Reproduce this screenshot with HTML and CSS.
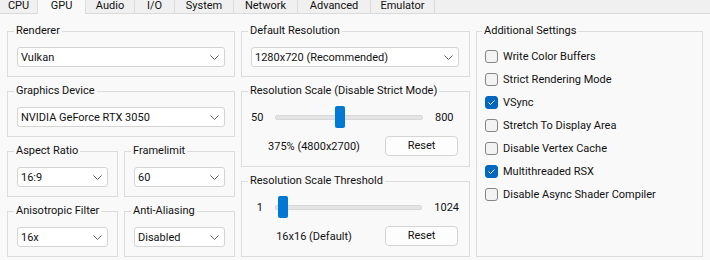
FILE: index.html
```html
<!DOCTYPE html>
<html lang="en">
<head>
	<meta charset="UTF-8">
	<title>GPU</title>
	<link rel="stylesheet" href="styles.css">
</head>

<body>
	<div class="tabs">
		<div class="tab">CPU</div>
		<div class="tab active">GPU</div>
		<div class="tab">Audio</div>
		<div class="tab">I/O</div>
		<div class="tab">System</div>
		<div class="tab">Network</div>
		<div class="tab">Advanced</div>
		<div class="tab">Emulator</div>
	</div>

	<div class="panel">
		<!-- left column -->
		<div class="col">
			<fieldset class="group">
				<legend>Renderer</legend>
				<div class="combo"><span>Vulkan</span><svg width="9" height="5" viewBox="0 0 9 5"><polyline points="0.5,0.5 4.5,4.5 8.5,0.5" /></svg></div>
			</fieldset>
			<fieldset class="group">
				<legend>Graphics Device</legend>
				<div class="combo"><span>NVIDIA GeForce RTX 3050</span><svg width="9" height="5" viewBox="0 0 9 5"><polyline points="0.5,0.5 4.5,4.5 8.5,0.5" /></svg></div>
			</fieldset>
			<div class="pair">
				<fieldset class="group">
					<legend>Aspect Ratio</legend>
					<div class="combo"><span>16:9</span><svg width="9" height="5" viewBox="0 0 9 5"><polyline points="0.5,0.5 4.5,4.5 8.5,0.5" /></svg></div>
				</fieldset>
				<fieldset class="group">
					<legend>Framelimit</legend>
					<div class="combo"><span>60</span><svg width="9" height="5" viewBox="0 0 9 5"><polyline points="0.5,0.5 4.5,4.5 8.5,0.5" /></svg></div>
				</fieldset>
			</div>
			<div class="pair">
				<fieldset class="group">
					<legend>Anisotropic Filter</legend>
					<div class="combo"><span>16x</span><svg width="9" height="5" viewBox="0 0 9 5"><polyline points="0.5,0.5 4.5,4.5 8.5,0.5" /></svg></div>
				</fieldset>
				<fieldset class="group">
					<legend>Anti-Aliasing</legend>
					<div class="combo"><span>Disabled</span><svg width="9" height="5" viewBox="0 0 9 5"><polyline points="0.5,0.5 4.5,4.5 8.5,0.5" /></svg></div>
				</fieldset>
			</div>
		</div>

		<!-- middle column -->
		<div class="col mid">
			<fieldset class="group">
				<legend>Default Resolution</legend>
				<div class="combo"><span>1280x720 (Recommended)</span><svg width="9" height="5" viewBox="0 0 9 5"><polyline points="0.5,0.5 4.5,4.5 8.5,0.5" /></svg></div>
			</fieldset>
			<fieldset class="group scale">
				<legend>Resolution Scale (Disable Strict Mode)</legend>
				<div class="slider">
					<span class="min">50</span>
					<div class="track"><div class="handle" style="left: 59px"></div></div>
					<span class="max">800</span>
				</div>
				<div class="value-row">
					<span class="value">375% (4800x2700)</span>
					<div class="btn">Reset</div>
				</div>
			</fieldset>
			<fieldset class="group scale">
				<legend>Resolution Scale Threshold</legend>
				<div class="slider">
					<span class="min">1</span>
					<div class="track"><div class="handle" style="left: 2px"></div></div>
					<span class="max">1024</span>
				</div>
				<div class="value-row">
					<span class="value">16x16 (Default)</span>
					<div class="btn">Reset</div>
				</div>
			</fieldset>
		</div>

		<!-- right column -->
		<div class="col">
			<fieldset class="group extra">
				<legend>Additional Settings</legend>
				<div class="check"><span class="box"></span>Write Color Buffers</div>
				<div class="check"><span class="box"></span>Strict Rendering Mode</div>
				<div class="check"><span class="box on"><svg width="13" height="13" viewBox="0 0 13 13"><polyline points="3.5,6.5 5.5,8.5 9.5,4.5" /></svg></span>VSync</div>
				<div class="check"><span class="box"></span>Stretch To Display Area</div>
				<div class="check"><span class="box"></span>Disable Vertex Cache</div>
				<div class="check"><span class="box on"><svg width="13" height="13" viewBox="0 0 13 13"><polyline points="3.5,6.5 5.5,8.5 9.5,4.5" /></svg></span>Multithreaded RSX</div>
				<div class="check"><span class="box"></span>Disable Async Shader Compiler</div>
			</fieldset>
		</div>
	</div>
</body>

</html>
```

FILE: styles.css
```css
body {
	margin: 0;
	background: #f9f9f9;
	color: #111;
	font-family: Roboto, "Noto Sans", sans-serif;
	font-size: 11px;
}

/*标签栏*/
.tabs {
	display: flex;
	height: 13px;
	background: #f0f0f0;
	border-bottom: 1px solid #dadada;
}
.tab {
	height: 13px;
	line-height: 12px;
	text-align: center;
	border-right: 1px solid #dcdcdc;
	white-space: nowrap;
}
.tab:nth-child(1) { width: 37px; }
.tab:nth-child(2) { width: 47px; }
.tab:nth-child(3) { width: 48px; }
.tab:nth-child(4) { width: 39px; }
.tab:nth-child(5) { width: 58px; }
.tab:nth-child(6) { width: 63px; }
.tab:nth-child(7) { width: 72px; }
.tab:nth-child(8) { width: 63px; }
.tab.active {
	height: 14px;
	line-height: 11px;
	margin-bottom: -1px;
	background: #f9f9f9;
	position: relative;
}

/*主面板*/
.panel {
	display: grid;
	grid-template-columns: 228px 229px 227px;
	column-gap: 6px;
	padding: 9px 8px 0 7px;
}
.col {
	display: flex;
	flex-direction: column;
	gap: 6px;
}
.pair {
	display: flex;
	gap: 6px;
}
.pair .group {
	flex: 1;
}

.group {
	margin: 0;
	min-width: 0;
	padding: 8px 9px 9px 9px;
	border: 1px solid #dcdcdc;
}
.mid .group {
	padding-right: 10px;
}
.group legend {
	padding: 0 2px;
	margin-left: -3px;
	line-height: 16px;
}

/*下拉框*/
.combo {
	display: flex;
	align-items: center;
	justify-content: space-between;
	height: 18px;
	padding: 0 4px 0 3px;
	background: #fff;
	border: 1px solid #d4d4d4;
	border-radius: 3px;
	white-space: nowrap;
}
.combo svg {
	margin-right: 1px;
}
.combo polyline {
	fill: none;
	stroke: #606060;
	stroke-width: 1;
}

/*滑块*/
.scale {
	padding-top: 7px;
	padding-bottom: 10px;
}
.slider {
	display: flex;
	align-items: center;
	height: 22px;
}
.slider .min {
	width: 12px;
	text-align: right;
	margin-right: 12px;
}
.slider .max {
	margin-left: 12px;
}
.track {
	position: relative;
	width: 146px;
	height: 3px;
	background: #e4e4e4;
	border: 1px solid #d8d8d8;
	border-radius: 2px;
}
.handle {
	position: absolute;
	top: -10px;
	width: 10px;
	height: 22px;
	background: #0078d4;
	border-radius: 2px;
}
.value-row {
	display: flex;
	align-items: center;
	margin-top: 8px;
}
.value {
	flex: 1;
	text-align: center;
}
.btn {
	width: 71px;
	height: 18px;
	line-height: 18px;
	margin: 0 1px 0 8px;
	text-align: center;
	background: #fdfdfd;
	border: 1px solid #d4d4d4;
	border-radius: 4px;
}

/*复选框*/
.extra {
	flex: 1;
	padding: 6px 8px 8px 8px;
}
.check {
	display: flex;
	align-items: center;
	height: 23px;
	white-space: nowrap;
}
.box {
	width: 11px;
	height: 11px;
	margin-right: 5px;
	background: #f3f3f3;
	border: 1px solid #858585;
	border-radius: 3px;
}
.box.on {
	background: #0067c0;
	border-color: #0067c0;
}
.box svg {
	display: block;
	margin: -1px;
}
.box polyline {
	fill: none;
	stroke: #fff;
	stroke-width: 1;
}
```
